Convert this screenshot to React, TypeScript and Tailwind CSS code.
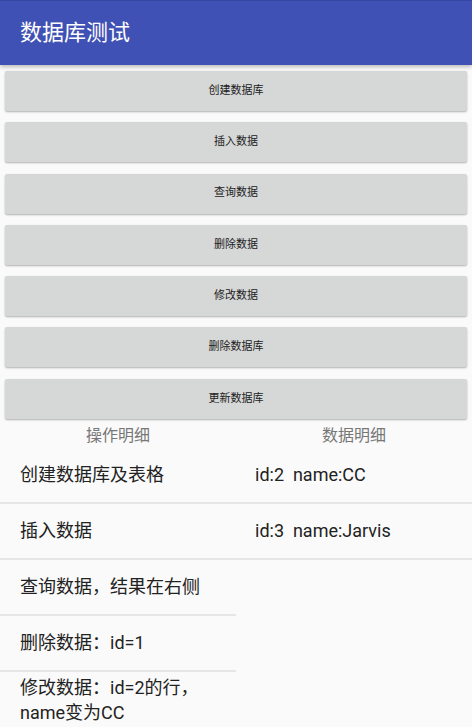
import React from 'react';

const buttons = ['创建数据库', '插入数据', '查询数据', '删除数据', '修改数据', '删除数据库', '更新数据库'];

const ops = ['创建数据库及表格', '插入数据', '查询数据，结果在右侧', '删除数据：id=1', '修改数据：id=2的行，name变为CC'];

const rows = ['id:2\u00a0\u00a0name:CC', 'id:3\u00a0\u00a0name:Jarvis'];

const font = { fontFamily: 'Roboto, "Noto Sans CJK SC", sans-serif' };

const App = () => {
  return (
    <div className="min-h-screen w-[472px] bg-[#fafafa] overflow-hidden" style={font}>
      <div className="relative z-10 h-[65px] bg-[#3f51b5] border-t border-[#3546a0] flex items-center pl-5 shadow-[0_2px_4px_rgba(0,0,0,0.25)]">
        <h1 className="text-[22px] text-white leading-none">数据库测试</h1>
      </div>

      <div className="flex flex-col gap-[11.3px] px-[5px] pt-[6px]">
        {buttons.map((b) => (
          <button
            key={b}
            className="h-10 w-full rounded-[2px] bg-[#d6d7d7] text-[11px] text-[#222] shadow-[0_1px_2px_rgba(0,0,0,0.3)]"
          >
            {b}
          </button>
        ))}
      </div>

      <div className="flex">
        <div className="w-[236px]">
          <div className="h-[29px] pt-[7px] leading-[19px] text-center text-[16px] text-[#777]">操作明细</div>
          {ops.map((o, i) => (
            <div
              key={o}
              className={
                i < 4
                  ? 'h-[56px] flex items-center pl-5 pr-3 text-[18px] text-[#222] border-b-2 border-[#e6e6e6]'
                  : 'pl-5 pr-3 pt-[3px] text-[18px] leading-[25px] text-[#222]'
              }
            >
              {o}
            </div>
          ))}
        </div>
        <div className="flex-1">
          <div className="h-[29px] pt-[7px] leading-[19px] text-center text-[16px] text-[#777]">数据明细</div>
          {rows.map((r) => (
            <div
              key={r}
              className="h-[56px] flex items-center pl-[19px] text-[18px] text-[#222] border-b-2 border-[#e6e6e6]"
            >
              {r}
            </div>
          ))}
        </div>
      </div>
    </div>
  );
};

export default App;
